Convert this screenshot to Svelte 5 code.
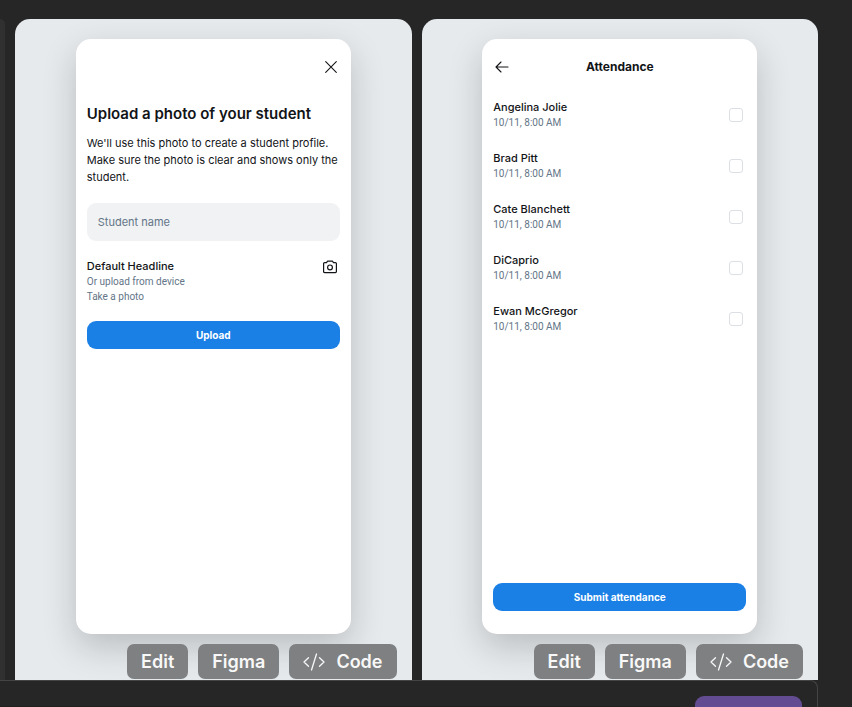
<script>
  const students = ['Angelina Jolie', 'Brad Pitt', 'Cate Blanchett', 'DiCaprio', 'Ewan McGregor'];
  const time = '10/11, 8:00 AM';
</script>

{#snippet actions()}
  <div class="actions">
    <button class="action">Edit</button>
    <button class="action">Figma</button>
    <button class="action">
      <svg width="22" height="18" viewBox="0 0 22 18" fill="none" stroke="currentColor" stroke-width="1.3" stroke-linecap="round" stroke-linejoin="round" aria-hidden="true">
        <path d="M5.500 4.800 1 9l4.500 4.200M16.500 4.800 21 9l-4.500 4.200M13.500 1 8.500 17" />
      </svg>
      Code
    </button>
  </div>
{/snippet}

<div class="workspace">
  <main class="gallery">
    <div class="previous"></div>

    <section class="panel">
      <div class="phone">
        <header class="bar end">
          <button class="icon" aria-label="Close">
            <svg width="14" height="14" viewBox="0 0 14 14" fill="none" stroke="currentColor" stroke-width="1.1" stroke-linecap="round">
              <path d="M1.700 1.700 12.300 12.300M12.300 1.700 1.700 12.300" />
            </svg>
          </button>
        </header>
        <h1>Upload a photo of your student</h1>
        <p class="intro">We'll use this photo to create a student profile. Make sure the photo is clear and shows only the student.</p>
        <input class="field" type="text" placeholder="Student name" aria-label="Student name" />
        <div class="source">
          <div>
            <h2 class="name">Default Headline</h2>
            <p class="meta">Or upload from device</p>
            <p class="meta">Take a photo</p>
          </div>
          <button class="icon" aria-label="Take a photo">
            <svg width="16" height="14" viewBox="0 0 16 14" fill="none" stroke="currentColor" stroke-width="1.2" stroke-linejoin="round">
              <path d="M2.600 2.600H4.500L5.600 1.200H10.400L11.500 2.600H13.400Q14.400 2.600 14.400 3.600V11.600Q14.400 12.600 13.400 12.600H2.600Q1.600 12.600 1.600 11.600V3.600Q1.600 2.600 2.600 2.600Z" />
              <circle cx="8" cy="7.400" r="2.400" />
            </svg>
          </button>
        </div>
        <button class="primary">Upload</button>
      </div>
      {@render actions()}
    </section>

    <section class="panel">
      <div class="phone">
        <header class="bar">
          <button class="icon" aria-label="Back">
            <svg width="14" height="14" viewBox="0 0 14 14" fill="none" stroke="currentColor" stroke-width="1.1" stroke-linecap="round" stroke-linejoin="round">
              <path d="M13 7H1M6 2 1 7l5 5" />
            </svg>
          </button>
          <h2 class="heading">Attendance</h2>
          <span class="spacer"></span>
        </header>
        <ul class="students">
          {#each students as student, i}
            <li>
              <label for="student-{i}">
                <span class="name">{student}</span>
                <span class="meta">{time}</span>
              </label>
              <input id="student-{i}" type="checkbox" />
            </li>
          {/each}
        </ul>
        <button class="primary bottom">Submit attendance</button>
      </div>
      {@render actions()}
    </section>
  </main>

  <footer class="composer">
    <textarea class="prompt" aria-label="Prompt"></textarea>
    <button class="send" aria-label="Send"></button>
  </footer>
</div>

<style>
  :global(body) {
    margin: 0;
    background: #262626;
  }
  .workspace, .workspace * {
    box-sizing: border-box;
  }
  .workspace {
    display: flex;
    flex-direction: column;
    height: 100vh;
    padding-right: 34px;
    overflow: hidden;
    background: #262626;
    color: #121417;
    font-family: Inter, "Liberation Sans", sans-serif;
  }
  button, input, textarea {
    font-family: inherit;
  }
  button {
    border: 0;
    cursor: pointer;
  }
  h1, h2, p, ul {
    margin: 0;
    padding: 0;
  }
  .gallery {
    display: flex;
    flex: 1;
    gap: 10px;
    min-height: 0;
    padding-top: 19px;
    overflow: hidden;
  }
  .previous {
    width: 5px;
    border-radius: 0 15px 0 0;
    background: #303030;
  }
  .panel {
    display: flex;
    flex: 1;
    flex-direction: column;
    align-items: center;
    gap: 10px;
    padding: 20px 15px 0;
    border-radius: 15px 15px 0 0;
    background: #e6eaed;
    overflow: hidden;
  }
  .phone {
    display: flex;
    flex: none;
    flex-direction: column;
    width: 100%;
    max-width: 275px;
    aspect-ratio: 275 / 595;
    padding: 11px;
    border-radius: 15px;
    background: #fff;
    box-shadow: 0 13px 34px rgba(0, 0, 0, 0.19);
  }
  .bar {
    display: flex;
    align-items: center;
    justify-content: space-between;
    height: 34px;
  }
  .end {
    justify-content: flex-end;
  }
  .icon {
    display: flex;
    flex: none;
    padding: 2px;
    background: none;
    color: #121417;
  }
  .spacer {
    width: 18px;
  }
  .heading {
    font-size: 12px;
    font-weight: 700;
    line-height: 16px;
  }
  h1 {
    margin-top: 19px;
    font-size: 15px;
    font-weight: 600;
    line-height: 22px;
  }
  .intro {
    margin-top: 10px;
    font-size: 11px;
    line-height: 17px;
  }
  .field {
    height: 38px;
    margin-top: 17px;
    padding: 0 11px;
    border: 0;
    border-radius: 9px;
    background: #f0f2f4;
    font-size: 11px;
  }
  .field::placeholder {
    color: #637587;
    opacity: 1;
  }
  .source {
    display: flex;
    align-items: flex-start;
    justify-content: space-between;
    margin-top: 17px;
  }
  .name {
    display: block;
    font-size: 11px;
    font-weight: 500;
    line-height: 16px;
  }
  .meta {
    display: block;
    color: #637587;
    font-family: Roboto, Inter, sans-serif;
    font-size: 10px;
    line-height: 15px;
  }
  .primary {
    flex: none;
    height: 28px;
    margin-top: 17px;
    border-radius: 9px;
    background: #1a80e6;
    color: #fff;
    font-size: 10px;
    font-weight: 700;
  }
  .bottom {
    margin: auto 0 12px;
  }
  .students {
    margin-top: 5px;
    list-style: none;
  }
  li {
    display: flex;
    align-items: center;
    justify-content: space-between;
    height: 51px;
    padding-right: 3px;
  }
  label {
    flex: 1;
  }
  input[type='checkbox'] {
    width: 14px;
    height: 14px;
    margin: 0;
    border: 1px solid #dce0e5;
    border-radius: 3px;
    appearance: none;
    background: #fff;
  }
  input[type='checkbox']:checked {
    border-color: #1a80e6;
    background: #1a80e6;
  }
  .actions {
    display: flex;
    gap: 10px;
    align-self: flex-end;
  }
  .action {
    display: flex;
    align-items: center;
    gap: 11px;
    height: 35px;
    padding: 0 14px;
    border-radius: 7px;
    background: #7f8081;
    color: #f8f8f8;
    font-size: 18px;
    font-weight: 600;
  }
  .composer {
    display: flex;
    flex: none;
    align-items: flex-start;
    gap: 15px;
    height: 27px;
    padding: 15px 15px 0 0;
    border: 1px solid #444;
    border-width: 1px 1px 0 0;
    border-radius: 0 8px 0 0;
    overflow: hidden;
  }
  .prompt {
    flex: 1;
    height: 40px;
    margin-top: 10px;
    border: 0;
    background: #1f1f1f;
    color: #fff;
    resize: none;
  }
  .send {
    width: 107px;
    height: 40px;
    border-radius: 9px;
    background: #644c93;
  }
</style>
